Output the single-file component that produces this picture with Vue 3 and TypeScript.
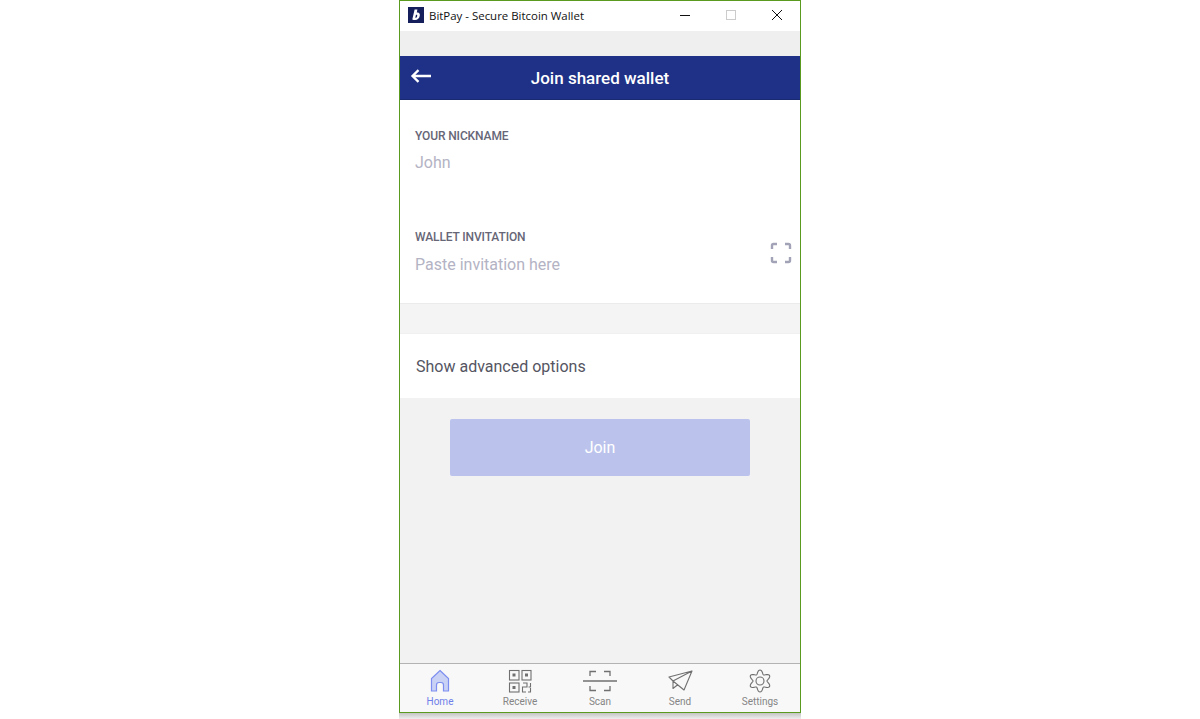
<template>
    <div class="window">
        <div class="titlebar">
            <svg class="app-logo" width="16" height="16" viewBox="0 0 16 16">
                <rect width="16" height="16" fill="#141f5c" />
                <path d="M6.6 2.4 L9.4 2.4 L8.8 5.6 C11 5.1 12.2 6.6 11.8 8.8 C11.4 11.3 9.6 13 7.1 13 C6 13 5.1 12.8 4.3 12.4 Z M7.9 7.9 L7.3 10.8 C8.4 11 9 10.2 9.2 9 C9.4 8 8.8 7.5 7.9 7.9 Z" fill="#fff" />
            </svg>
            <span class="title-text">BitPay - Secure Bitcoin Wallet</span>
            <div class="win-controls">
                <span class="win-btn"><i class="win-min"></i></span>
                <span class="win-btn"><i class="win-max"></i></span>
                <span class="win-btn">
                    <svg width="12" height="12" viewBox="0 0 12 12"><path d="M1 1 L11 11 M11 1 L1 11" stroke="#111" stroke-width="1" fill="none" /></svg>
                </span>
            </div>
        </div>
        <div class="status-strip"></div>
        <header class="nav-header">
            <button class="back-btn" aria-label="Back">
                <svg width="22" height="14" viewBox="0 0 22 14"><path d="M21 7 H2.5 M8.5 1.2 L2.5 7 L8.5 12.8" stroke="#fff" stroke-width="2.3" fill="none" /></svg>
            </button>
            <h1>Join shared wallet</h1>
        </header>
        <main class="content">
            <section class="form-card">
                <div class="field field-nick">
                    <label>YOUR NICKNAME</label>
                    <div class="placeholder">John</div>
                </div>
                <div class="field field-invite">
                    <label>WALLET INVITATION</label>
                    <div class="placeholder">Paste invitation here</div>
                    <svg class="scan-small" width="22" height="22" viewBox="0 0 22 22">
                        <path d="M2 7 V3.5 Q2 2 3.5 2 H7 M15 2 H18.5 Q20 2 20 3.5 V7 M20 15 V18.5 Q20 20 18.5 20 H15 M7 20 H3.5 Q2 20 2 18.5 V15" stroke="#a3a3b8" stroke-width="2.4" fill="none" />
                    </svg>
                </div>
            </section>
            <div class="section-gap"></div>
            <section class="advanced">Show advanced options</section>
            <div class="action">
                <button class="join-btn" disabled>Join</button>
            </div>
        </main>
        <nav class="tabs">
            <div v-for="tab in tabs" :key="tab.name" class="tab" :class="{ active: tab.active }">
                <svg width="34" height="26" viewBox="0 0 34 26" v-html="tab.icon"></svg>
                <span>{{ tab.name }}</span>
            </div>
        </nav>
    </div>
    <div class="window-shadow"></div>
</template>

<script setup lang="ts">
interface Tab {
    name: string;
    icon: string;
    active?: boolean;
}

const g = 'fill="none" stroke="#707070" stroke-width="1.1"';

// six rounded lobes around the centre of the 34x26 icon box
const gearPath = (): string => {
    const pts: string[] = [];
    for (let i = 0; i < 96; i++) {
        const a = (i / 96) * Math.PI * 2 - Math.PI / 2;
        const r = 9 + 2 * Math.cos(6 * (a + Math.PI / 2));
        pts.push(`${(17 + r * Math.cos(a)).toFixed(2)} ${(13 + r * Math.sin(a)).toFixed(2)}`);
    }
    return `M${pts.join(' L')} Z`;
};

const tabs: Tab[] = [
    {
        name: 'Home',
        active: true,
        icon: '<path d="M17 2.5 L25.5 10.5 V23 H20.5 V17 Q20.5 14.5 18 14.5 H16 Q13.5 14.5 13.5 17 V23 H8.5 V10.5 Z" fill="#c9d2f5" stroke="#7d8ef0" stroke-width="1.2"/>',
    },
    {
        name: 'Receive',
        icon: `<g ${g}><rect x="6.5" y="2.5" width="9.5" height="9.5"/><rect x="19" y="2.5" width="9" height="9.5"/><rect x="6.5" y="15" width="9.5" height="9"/><path d="M20 15 H24 V19 H19.5 V24 H23 M25.5 19 H27.5 V15 M27.5 20 V24 H25"/></g><g fill="#707070"><rect x="9.5" y="5.5" width="3" height="3"/><rect x="22" y="5.5" width="3" height="3"/><rect x="9.5" y="18" width="3" height="3"/></g>`,
    },
    {
        name: 'Scan',
        icon: `<g ${g}><path d="M0 13 H34 M7 8 V3.5 H13 M21 3.5 H27 V8 M7 18 V22.5 H13 M21 22.5 H27 V18" stroke-width="1.3"/></g>`,
    },
    {
        name: 'Send',
        icon: `<g ${g}><path d="M6 9 L29 3 L21 22 L10 13 Z M29 3 L10 13 L10 20.5 L15 16.5" stroke-linejoin="round"/></g>`,
    },
    {
        name: 'Settings',
        icon: `<g ${g}><circle cx="17" cy="13" r="4"/><path d="${gearPath()}" stroke-linejoin="round"/></g>`,
    },
];
</script>

<style>
html,
body {
    margin: 0;
    background: #fff;
}
</style>

<style scoped>
.window {
    box-sizing: border-box;
    width: 402px;
    height: 713px;
    margin-left: 399px;
    border: 1px solid #5a9a1e;
    display: flex;
    flex-direction: column;
    font-family: Roboto, sans-serif;
    background: #f2f2f2;
}

.window-shadow {
    width: 402px;
    height: 6px;
    margin-left: 399px;
    background: linear-gradient(#c4c4c4, #eeeeee);
}

.titlebar {
    box-sizing: border-box;
    height: 30px;
    padding: 0 0 2px 8px;
    background: #fff;
    display: flex;
    align-items: center;
    flex-shrink: 0;
}

.app-logo {
    margin-right: 5px;
}

.title-text {
    font-family: "Open Sans", sans-serif;
    font-size: 11.45px;
    color: #111;
}

.win-controls {
    margin-left: auto;
    display: flex;
}

.win-btn {
    width: 46px;
    height: 28px;
    display: flex;
    align-items: center;
    justify-content: center;
}

.win-min {
    width: 10px;
    height: 1px;
    background: #111;
}

.win-max {
    box-sizing: border-box;
    width: 10px;
    height: 10px;
    border: 1px solid #ccc;
}

.status-strip {
    height: 25px;
    background: #efefef;
    flex-shrink: 0;
}

.nav-header {
    height: 44px;
    background: #1e3186;
    border-bottom: 1px solid #1a2a70;
    box-sizing: border-box;
    display: flex;
    align-items: center;
    justify-content: center;
    position: relative;
    flex-shrink: 0;
}

.nav-header h1 {
    margin: 0;
    font-size: 17px;
    font-weight: 500;
    color: #fff;
}

.back-btn {
    position: absolute;
    left: 10px;
    top: 13px;
    padding: 0;
    border: none;
    background: none;
    display: flex;
}

.content {
    flex: 1;
    display: flex;
    flex-direction: column;
}

.form-card {
    background: #fff;
    height: 204px;
    box-sizing: border-box;
    border-bottom: 1px solid #ebebeb;
    padding: 0 15px;
}

.field {
    position: relative;
}

.field-nick {
    padding-top: 29px;
    height: 101px;
    box-sizing: border-box;
}

.field-invite {
    padding-top: 29px;
}

.field label {
    display: block;
    font-size: 12px;
    font-weight: 500;
    line-height: 14px;
    letter-spacing: -0.01em;
    color: #667;
}

.placeholder {
    margin-top: 10px;
    font-size: 16px;
    line-height: 19px;
    color: #b3b3c4;
}

.field-invite .placeholder {
    margin-top: 11px;
}

.scan-small {
    position: absolute;
    right: -7px;
    top: 41px;
}

.section-gap {
    height: 29px;
    background: #f4f4f4;
}

.advanced {
    height: 65px;
    background: #fff;
    border-top: 1px solid #f0f0f0;
    box-sizing: border-box;
    padding-left: 16px;
    display: flex;
    align-items: center;
    font-size: 16px;
    color: #555562;
}

.action {
    display: flex;
    justify-content: center;
    padding-top: 21px;
}

.join-btn {
    width: 300px;
    height: 57px;
    border: none;
    border-radius: 2px;
    background: #bbc3ec;
    color: #fff;
    font-family: Roboto, sans-serif;
    font-size: 16px;
}

.tabs {
    height: 48px;
    background: #f8f8f8;
    border-top: 1px solid #b3b3b3;
    display: flex;
    flex-shrink: 0;
}

.tab {
    flex: 1;
    display: flex;
    flex-direction: column;
    align-items: center;
    padding-top: 4px;
    font-size: 10px;
    line-height: 12px;
    color: #858585;
}

.tab span {
    margin-top: 2px;
}

.tab.active {
    color: #6f80ea;
}
</style>
